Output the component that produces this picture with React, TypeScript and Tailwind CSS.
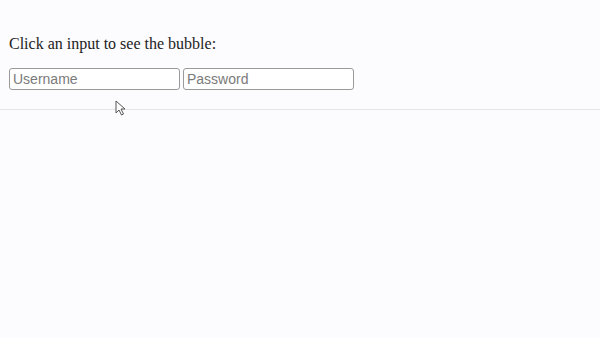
import React from 'react';

const Cursor = () => (
  <svg width="12" height="17" viewBox="0 0 12 17" className="absolute left-[115px] top-[100px]">
    <path d="M1 1 L1 13 L4 10 L6.5 15 L8.5 14 L6 9 L10 9 Z" fill="#fff" stroke="#555" strokeWidth="1" strokeLinejoin="round" />
  </svg>
);

const App = () => {
  return (
    <div className="relative min-h-[338px] w-full bg-[#fcfbfd]">
      <div className="pl-[9px] pt-[34px]">
        <p className="text-[16px] leading-5 text-[#222]" style={{ fontFamily: '"Liberation Serif", serif' }}>
          Click an input to see the bubble:
        </p>
        <div className="mt-[14px] flex gap-[3px]">
          <input
            type="text"
            placeholder="Username"
            className="h-[22px] w-[171px] rounded-[3px] border border-[#9a9a9a] bg-white px-[3px] text-[14px] text-[#333] placeholder:text-[#7a7a7a] outline-none"
            style={{ fontFamily: '"Liberation Sans", Arial, sans-serif' }}
          />
          <input
            type="password"
            placeholder="Password"
            className="h-[22px] w-[171px] rounded-[3px] border border-[#9a9a9a] bg-white px-[3px] text-[14px] text-[#333] placeholder:text-[#7a7a7a] outline-none"
            style={{ fontFamily: '"Liberation Sans", Arial, sans-serif' }}
          />
        </div>
      </div>
      <div className="mt-[19px] h-px w-full bg-[#e4e3e6]" />
      <Cursor />
    </div>
  );
};

export default App;
